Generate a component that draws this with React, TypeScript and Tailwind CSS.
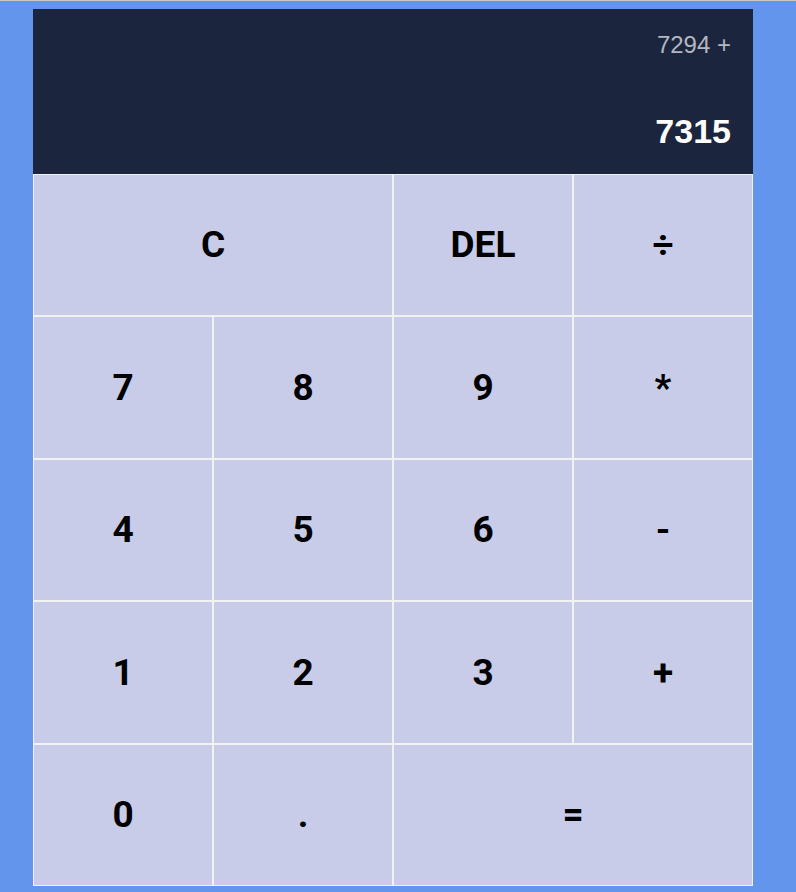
import React from "react";

const keys: { label: string; span?: string }[] = [
  { label: "C", span: "col-span-2" },
  { label: "DEL" },
  { label: "÷" },
  { label: "7" },
  { label: "8" },
  { label: "9" },
  { label: "*" },
  { label: "4" },
  { label: "5" },
  { label: "6" },
  { label: "-" },
  { label: "1" },
  { label: "2" },
  { label: "3" },
  { label: "+" },
  { label: "0" },
  { label: "." },
  { label: "=", span: "col-span-2" },
];

export default function App() {
  return (
    <div className="min-h-[892px] w-full bg-[#6495ed] border-t border-[#c9c9c9]">
      <div className="pt-2 pl-[33px]">
        <div className="grid grid-cols-[repeat(4,180px)] grid-rows-[165px_repeat(5,142.4px)] w-[720px]">
          <div className="col-span-4 bg-[#1b263e] flex flex-col items-end justify-between pr-[22px] pt-[24px] pb-[26px] font-['Liberation_Sans',Arial,sans-serif]">
            <div className="text-[24px] font-medium text-[#b3b7c0] leading-none">7294 +</div>
            <div className="text-[34px] font-bold text-white leading-none">7315</div>
          </div>
          {keys.map((k, i) => (
            <button
              key={i}
              className={`${k.span ?? ""} bg-[#c8cce8] border border-[#f2f2f2] flex items-center justify-center text-[37px] font-bold text-black font-['Roboto',Arial,sans-serif]`}
            >
              {k.label}
            </button>
          ))}
        </div>
      </div>
    </div>
  );
}
